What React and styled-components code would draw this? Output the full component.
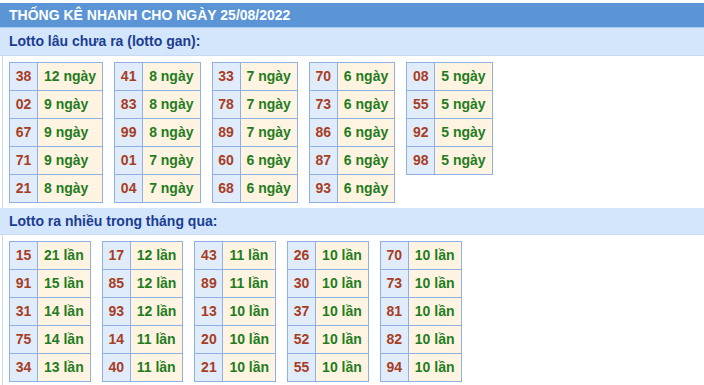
import React from "react";
import styled, { createGlobalStyle } from "styled-components";

const Global = createGlobalStyle`
  html, body { margin: 0; padding: 0; background: #ffffff; }
  body { font-family: "Liberation Sans", Arial, sans-serif; }
`;

const Page = styled.div`
  width: 704px;
  padding-top: 3px;
  background: #ffffff;
`;

const Header = styled.div`
  height: 25px;
  line-height: 25px;
  background: #5b95d6;
  border-bottom: 1px solid #a9c9ee;
  box-sizing: border-box;
  color: #ffffff;
  font-weight: bold;
  font-size: 14px;
  padding-left: 9px;
`;

const SubHeader = styled.div`
  height: ${(p) => p.$h}px;
  box-sizing: border-box;
  line-height: ${(p) => p.$h - 1}px;
  background: #d4e6fb;
  border-bottom: 1px solid #c6dbf3;
  color: #1b3d92;
  font-weight: bold;
  font-size: 14px;
  padding-left: 9px;
`;

const Body = styled.div`
  margin-left: 2px;
  border-left: 1px solid #c9d9ee;
  padding: 6px 0 5px 6px;
  display: flex;
  flex-wrap: wrap;
  align-items: flex-start;
  gap: 11px;
`;

const Table = styled.div`
  display: inline-grid;
  grid-template-columns: 28px auto;
  border-left: 1px solid #8eb0e2;
  border-top: 1px solid #8eb0e2;
`;

const Cell = styled.div`
  height: 27px;
  line-height: 27px;
  border-right: 1px solid #8eb0e2;
  border-bottom: 1px solid #8eb0e2;
  font-size: 14px;
  font-weight: bold;
  white-space: nowrap;
`;

const Num = styled(Cell)`
  background: #e1ecfb;
  color: #a83d1f;
  text-align: center;
`;

const Val = styled(Cell)`
  background: #fff3e1;
  color: #1f7d1f;
  padding: 0 6px;
  text-align: left;
`;

const gan = [
  [["38", "12 ngày"], ["02", "9 ngày"], ["67", "9 ngày"], ["71", "9 ngày"], ["21", "8 ngày"]],
  [["41", "8 ngày"], ["83", "8 ngày"], ["99", "8 ngày"], ["01", "7 ngày"], ["04", "7 ngày"]],
  [["33", "7 ngày"], ["78", "7 ngày"], ["89", "7 ngày"], ["60", "6 ngày"], ["68", "6 ngày"]],
  [["70", "6 ngày"], ["73", "6 ngày"], ["86", "6 ngày"], ["87", "6 ngày"], ["93", "6 ngày"]],
  [["08", "5 ngày"], ["55", "5 ngày"], ["92", "5 ngày"], ["98", "5 ngày"]],
];

const nhieu = [
  [["15", "21 lần"], ["91", "15 lần"], ["31", "14 lần"], ["75", "14 lần"], ["34", "13 lần"]],
  [["17", "12 lần"], ["85", "12 lần"], ["93", "12 lần"], ["14", "11 lần"], ["40", "11 lần"]],
  [["43", "11 lần"], ["89", "11 lần"], ["13", "10 lần"], ["20", "10 lần"], ["21", "10 lần"]],
  [["26", "10 lần"], ["30", "10 lần"], ["37", "10 lần"], ["52", "10 lần"], ["55", "10 lần"]],
  [["70", "10 lần"], ["73", "10 lần"], ["81", "10 lần"], ["82", "10 lần"], ["94", "10 lần"]],
];

function Group({ data }) {
  return (
    <Body>
      {data.map((t, i) => (
        <Table key={i}>
          {t.map(([n, v]) => (
            <React.Fragment key={n}>
              <Num>{n}</Num>
              <Val>{v}</Val>
            </React.Fragment>
          ))}
        </Table>
      ))}
    </Body>
  );
}

export default function App() {
  return (
    <Page>
      <Global />
      <Header>THỐNG KÊ NHANH CHO NGÀY 25/08/2022</Header>
      <SubHeader $h={28}>Lotto lâu chưa ra (lotto gan):</SubHeader>
      <Group data={gan} />
      <SubHeader $h={27}>Lotto ra nhiều trong tháng qua:</SubHeader>
      <Group data={nhieu} />
    </Page>
  );
}
